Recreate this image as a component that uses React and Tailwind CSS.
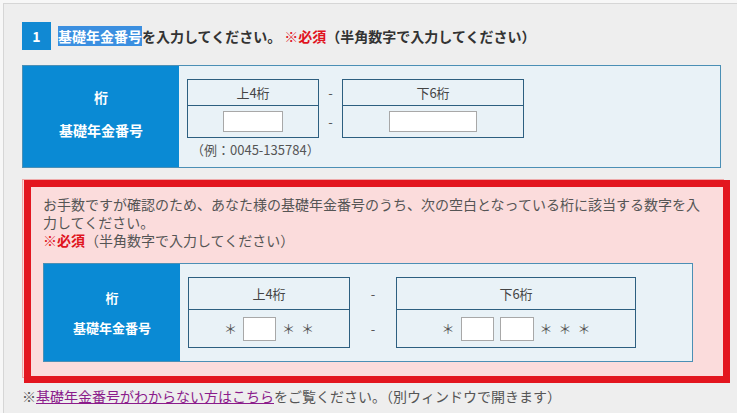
import React from "react";

const F = "font-['Noto_Sans_CJK_JP','Noto_Sans',sans-serif]";

function Star() {
  return <span className="w-[13px] text-center text-[13px] leading-[18px] text-[#555]">＊</span>;
}

function Box({ w, h }) {
  return <span className={`block bg-white border border-[#a8a8a8] ${w} ${h}`} />;
}

export default function App() {
  return (
    <div className={`min-h-screen bg-[#f7f7f7] pl-[3px] pt-[3px] ${F}`}>
      <div className="min-h-[410px] border-l border-t border-[#d6d6d6] bg-[#eeeeee] pl-[18px] pt-[18px]">
        {/* Heading */}
        <div className="flex h-[28px] items-center">
          <div className="flex h-[28px] w-[29px] items-center justify-center bg-[#1189d3] text-[14px] font-bold text-white">
            1
          </div>
          <div className="ml-[7px] whitespace-nowrap text-[14px] font-bold leading-[20px] text-[#333]">
            <span className="bg-[#3b8fe0] text-white">基礎年金番号</span>を入力してください。{" "}
            <span className="text-[#e0141e]">※必須</span>（半角数字で入力してください）
          </div>
        </div>

        {/* Panel 1 */}
        <div className="mt-[15px] flex h-[103px] w-[699px] border border-[#4b8fb5] bg-[#e9f2f7]">
          <div className="flex w-[156px] flex-col items-center justify-center gap-[13px] bg-[#0a8ad4] pb-[6px] text-[14px] font-bold leading-[20px] text-white">
            <span>桁</span>
            <span>基礎年金番号</span>
          </div>
          <div className="pl-[8px] pt-[13px]">
            <div className="flex items-start">
              <div className="w-[132px] border border-[#2d5f80]">
                <div className="flex h-[26px] items-center justify-center border-b border-[#2d5f80] text-[13px] text-[#444]">上4桁</div>
                <div className="flex h-[31px] items-center justify-center">
                  <Box w="w-[60px]" h="h-[21px]" />
                </div>
              </div>
              <div className="flex w-[23px] flex-col items-center text-[13px] text-[#555]">
                <span className="flex h-[27px] items-center">-</span>
                <span className="flex h-[32px] items-center">-</span>
              </div>
              <div className="w-[182px] border border-[#2d5f80]">
                <div className="flex h-[26px] items-center justify-center border-b border-[#2d5f80] text-[13px] text-[#444]">下6桁</div>
                <div className="flex h-[31px] items-center justify-center">
                  <Box w="w-[88px]" h="h-[21px]" />
                </div>
              </div>
            </div>
            <div className="ml-[4px] mt-[4px] text-[13px] leading-[16px] text-[#555]">（例：0045-135784）</div>
          </div>
        </div>

        {/* Red box */}
        <div className="relative mt-[11px] w-[702px]">
          <div className="border border-[#eeaaaa] bg-[#fbdcdc] px-[20px] pb-[15px] pt-[15px]">
            <p className="text-[14px] leading-[18px] text-[#555]">
              お手数ですが確認のため、あなた様の基礎年金番号のうち、次の空白となっている桁に該当する数字を入
              <br />
              力してください。
              <br />
              <span className="font-bold text-[#e0141e]">※必須</span>（半角数字で入力してください）
            </p>
            <div className="mt-[14px] flex h-[99px] w-[650px] border border-[#4b8fb5] bg-[#e9f2f7]">
              <div className="flex w-[136px] flex-col items-center justify-center gap-[12px] bg-[#0a8ad4] text-[13px] font-bold leading-[18px] text-white">
                <span>桁</span>
                <span>基礎年金番号</span>
              </div>
              <div className="flex items-start pl-[8px] pt-[13px]">
                <div className="w-[162px] border border-[#2d5f80]">
                  <div className="flex h-[32px] items-center justify-center border-b border-[#2d5f80] text-[13px] text-[#444]">上4桁</div>
                  <div className="flex h-[37px] items-center justify-center gap-[6px]">
                    <Star />
                    <Box w="w-[33px]" h="h-[24px]" />
                    <Star />
                    <Star />
                  </div>
                </div>
                <div className="flex w-[46px] flex-col items-center text-[13px] text-[#555]">
                  <span className="flex h-[33px] items-center">-</span>
                  <span className="flex h-[38px] items-center">-</span>
                </div>
                <div className="w-[240px] border border-[#2d5f80]">
                  <div className="flex h-[32px] items-center justify-center border-b border-[#2d5f80] text-[13px] text-[#444]">下6桁</div>
                  <div className="flex h-[37px] items-center justify-center gap-[6px]">
                    <Star />
                    <Box w="w-[33px]" h="h-[24px]" />
                    <Box w="w-[34px]" h="h-[24px]" />
                    <Star />
                    <Star />
                    <Star />
                  </div>
                </div>
              </div>
            </div>
          </div>
          <div className="pointer-events-none absolute left-[2px] top-[1px] h-[203px] w-[706px] border-[7px] border-[#e3161f]" />
        </div>

        {/* Footer */}
        <div className="mt-[9px] whitespace-nowrap text-[14px] leading-[18px] text-[#555]">
          ※<a href="#" className="text-[#8b1c8b] underline">基礎年金番号がわからない方はこちら</a>をご覧ください。（別ウィンドウで開きます）
        </div>
      </div>
    </div>
  );
}
